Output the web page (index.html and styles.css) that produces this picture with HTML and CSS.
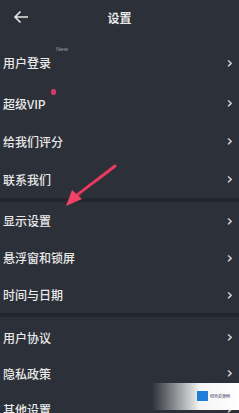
FILE: index.html
```html
<!DOCTYPE html>
<html lang="zh">
<head>
<meta charset="utf-8">
<link rel="stylesheet" href="styles.css">
</head>
<body>
<div class="screen">
  <header class="topbar">
    <svg class="back" width="16" height="14" viewBox="0 0 16 14"><path d="M15 7H2M7.5 1.5L2 7l5.5 5.5" fill="none" stroke="#e6e6e6" stroke-width="1.6"/></svg>
    <div class="title">设置</div>
  </header>
  <section class="group g1">
    <div class="row first"><span class="label">用户登录<span class="new">New</span></span><span class="chev">›</span></div>
    <div class="row"><span class="label">超级VIP<span class="dot"></span></span><span class="chev">›</span></div>
    <div class="row"><span class="label">给我们评分</span><span class="chev">›</span></div>
    <div class="row"><span class="label">联系我们</span><span class="chev">›</span></div>
  </section>
  <div class="sep"></div>
  <section class="group g2">
    <div class="row"><span class="label">显示设置</span><span class="chev">›</span></div>
    <div class="row"><span class="label">悬浮窗和锁屏</span><span class="chev">›</span></div>
    <div class="row"><span class="label">时间与日期</span><span class="chev">›</span></div>
  </section>
  <div class="sep"></div>
  <section class="group g3">
    <div class="row"><span class="label">用户协议</span><span class="chev">›</span></div>
    <div class="row"><span class="label">隐私政策</span><span class="chev">›</span></div>
    <div class="row"><span class="label">其他设置</span><span class="chev">›</span></div>
  </section>
  <svg class="arrow" width="239" height="413" viewBox="0 0 239 413"><path d="M115 166 C100 178 88 186 76 196" fill="none" stroke="#e8395e" stroke-width="3" stroke-linecap="round"/><path d="M66 206 L72 190 L82 199 Z" fill="#f04466"/></svg>
  <div class="watermark"><div class="logo"><span class="cube"></span><span class="wmtext">绿色资源网</span></div></div>
</div>
</body>
</html>
```
FILE: styles.css
```css
* { box-sizing: border-box; }
html, body { margin: 0; padding: 0; }
body { width: 239px; height: 413px; overflow: hidden; background: #2c3038; font-family: "Noto Sans CJK SC", "Noto Sans", sans-serif; color: #e9e9e9; }
.screen { position: relative; width: 239px; height: 413px; }
.topbar { height: 40px; display: flex; align-items: center; justify-content: center; position: relative; }
.back { position: absolute; left: 13px; top: 10px; }
.title { font-size: 12px; font-weight: 700; margin-top: -6px; }
.group { display: flex; flex-direction: column; }
.row { height: 38px; display: flex; align-items: center; justify-content: space-between; padding: 0 6px 0 3px; font-size: 12px; font-weight: 500; }
.row.first { height: 44px; padding-top: 1px; }
.g2 .row { height: 37px; }
.g3 { margin-top: 2px; }
.g3 .row { height: 36px; }
.label { position: relative; }
.new { position: absolute; left: 53px; top: -8px; font-size: 6px; color: #9aa0a8; font-family: "Liberation Sans", sans-serif; font-weight: 400; }
.dot { position: absolute; left: 48px; top: -6px; width: 5px; height: 6px; background: #d23a6a; border-radius: 2px; }
.chev { font-size: 16px; line-height: 1; color: #e6e6e6; font-family: "DejaVu Sans", sans-serif; }
.sep { height: 4px; background: #23262c; }
.arrow { position: absolute; left: 0; top: 0; pointer-events: none; }
.watermark { position: absolute; left: 152px; top: 383px; width: 87px; height: 27px; background: linear-gradient(90deg, rgba(255,255,255,0) 0%, #f4f4f4 55%, #ffffff 100%); }
.logo { position: absolute; left: 45px; top: 8px; display: flex; align-items: center; gap: 2px; }
.cube { width: 11px; height: 10px; background: #1f7fd8; }
.wmtext { font-size: 4px; color: #335; }
```
